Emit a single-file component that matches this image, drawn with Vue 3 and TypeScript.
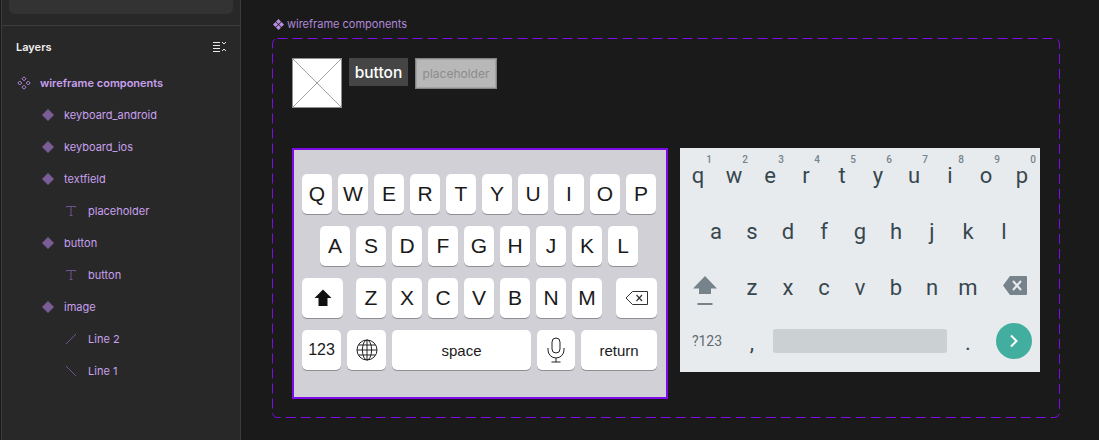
<script setup lang="ts">
type LayerKind = "root" | "comp" | "text" | "line2" | "line1";
interface Layer {
  name: string;
  kind: LayerKind;
  depth: number;
}

const layers: Layer[] = [
  { name: "wireframe components", kind: "root", depth: 0 },
  { name: "keyboard_android", kind: "comp", depth: 1 },
  { name: "keyboard_ios", kind: "comp", depth: 1 },
  { name: "textfield", kind: "comp", depth: 1 },
  { name: "placeholder", kind: "text", depth: 2 },
  { name: "button", kind: "comp", depth: 1 },
  { name: "button", kind: "text", depth: 2 },
  { name: "image", kind: "comp", depth: 1 },
  { name: "Line 2", kind: "line2", depth: 2 },
  { name: "Line 1", kind: "line1", depth: 2 },
];

const iosRow1 = "QWERTYUIOP".split("");
const iosRow2 = "ASDFGHJKL".split("");
const iosRow3 = "ZXCVBNM".split("");

const androidRow1 = "qwertyuiop".split("");
const androidHints = "1234567890".split("");
const androidRow2 = "asdfghjkl".split("");
const androidRow3 = "zxcvbnm".split("");
</script>

<template>
  <div class="app">
    <aside class="sidebar">
      <div class="top-panel"><div class="search"></div></div>
      <div class="layers-head">
        <span>Layers</span>
        <svg width="14" height="12" viewBox="0 0 14 12" fill="none" stroke="#e8e8e8" stroke-width="1">
          <path d="M0 1.5h7M0 4.5h7M0 7.5h7M0 10.5h7" />
          <path d="M9 1l2 2 2-2M9 10l2-2 2 2" />
        </svg>
      </div>
      <div
        v-for="(layer, i) in layers"
        :key="i"
        class="layer"
        :class="{ root: layer.kind === 'root' }"
        :style="{ paddingLeft: 16 + layer.depth * 24 + 'px' }"
      >
        <span class="layer-icon">
          <svg v-if="layer.kind === 'root'" width="14" height="14" viewBox="0 0 14 14" fill="none" stroke="#b088d8" stroke-width="1">
            <path d="M7 .8L9 2.8 7 4.8 5 2.8zM7 9.2L9 11.2 7 13.2 5 11.2zM2.8 5L4.8 7 2.8 9 .8 7zM11.2 5L13.2 7 11.2 9 9.2 7z" />
          </svg>
          <svg v-else-if="layer.kind === 'comp'" width="14" height="14" viewBox="0 0 14 14">
            <path d="M7 1L13 7 7 13 1 7z" fill="#7a5c99" />
          </svg>
          <svg v-else-if="layer.kind === 'text'" width="12" height="12" viewBox="0 0 12 12" fill="none" stroke="#6f5590" stroke-width="1">
            <path d="M1.5 2.5V1.5h9v1M6 1.5v8.5M4.5 10.5h3" />
          </svg>
          <svg v-else-if="layer.kind === 'line2'" width="12" height="12" viewBox="0 0 12 12" stroke="#6f5590" stroke-width="1">
            <path d="M1 11L11 1" />
          </svg>
          <svg v-else width="12" height="12" viewBox="0 0 12 12" stroke="#6f5590" stroke-width="1">
            <path d="M1 1L11 11" />
          </svg>
        </span>
        <span>{{ layer.name }}</span>
      </div>
    </aside>

    <main class="canvas">
      <div class="frame-label">
        <svg width="11" height="11" viewBox="0 0 11 11" fill="#b98ee0">
          <path d="M5.5 0L8 2.5 5.5 5 3 2.5zM5.5 6L8 8.5 5.5 11 3 8.5zM2.5 3L5 5.5 2.5 8 0 5.5zM8.5 3L11 5.5 8.5 8 6 5.5z" />
        </svg>
        <span>wireframe components</span>
      </div>
      <div class="frame">
        <svg class="frame-dash" width="788" height="380" viewBox="0 0 788 380" fill="none">
          <rect x="0.5" y="0.5" width="787" height="379" rx="5" stroke="#7f0ce8" stroke-width="1" stroke-dasharray="10 5" />
        </svg>

        <div class="atoms">
          <div class="image-ph">
            <svg width="48" height="48" viewBox="0 0 48 48" stroke="#a3a3a3" stroke-width="1">
              <path d="M0 0L48 48M48 0L0 48" />
            </svg>
          </div>
          <div class="btn">button</div>
          <div class="field">placeholder</div>
        </div>

        <div class="keyboards">
          <div class="ios">
            <div class="ios-row">
              <div v-for="k in iosRow1" :key="k" class="key">{{ k }}</div>
            </div>
            <div class="ios-row row-a">
              <div v-for="k in iosRow2" :key="k" class="key">{{ k }}</div>
            </div>
            <div class="ios-row">
              <div class="key wide shift-key">
                <svg width="18" height="18" viewBox="0 0 18 18"><path d="M9 .5L17.5 9H13.5V17H4.5V9H.5z" fill="#111" /></svg>
              </div>
              <div v-for="k in iosRow3" :key="k" class="key">{{ k }}</div>
              <div class="key wide del-key">
                <svg width="24" height="16" viewBox="0 0 24 16" fill="none" stroke="#333" stroke-width="1">
                  <path d="M7.5 1.5H22.5V14.5H7.5L1 8z" />
                  <path d="M11.5 5l5.5 6M17 5l-5.5 6" stroke-width="1.2" />
                </svg>
              </div>
            </div>
            <div class="ios-row">
              <div class="key small w39">123</div>
              <div class="key w39">
                <svg width="22" height="22" viewBox="0 0 22 22" fill="none" stroke="#222" stroke-width="1">
                  <circle cx="11" cy="11" r="10" />
                  <ellipse cx="11" cy="11" rx="4.6" ry="10" />
                  <path d="M11 1v20M1 11h20M2.5 6h17M2.5 16h17" />
                </svg>
              </div>
              <div class="key label space">space</div>
              <div class="key w38">
                <svg width="18" height="26" viewBox="0 0 18 26" fill="none" stroke="#222" stroke-width="1">
                  <rect x="5" y="1" width="8" height="15" rx="4" />
                  <path d="M1 11v2a8 8 0 0 0 16 0v-2M9 21v4M4.5 25h9" />
                </svg>
              </div>
              <div class="key label ret">return</div>
            </div>
          </div>

          <div class="android">
            <div class="a-row">
              <div v-for="(k, i) in androidRow1" :key="k" class="a-key">
                <span class="hint">{{ androidHints[i] }}</span>{{ k }}
              </div>
            </div>
            <div class="a-row centered">
              <div v-for="k in androidRow2" :key="k" class="a-key">{{ k }}</div>
            </div>
            <div class="a-row">
              <div class="a-side">
                <svg class="a-shift" width="24" height="30" viewBox="0 0 24 30" fill="#77838a">
                  <path d="M12 0L24 12.5H18V18H6V12.5H0z" />
                  <rect x="4.5" y="27" width="15" height="2" />
                </svg>
              </div>
              <div v-for="k in androidRow3" :key="k" class="a-key">{{ k }}</div>
              <div class="a-side">
                <svg class="a-del" width="24" height="19" viewBox="0 0 24 19">
                  <path d="M7 0H23a1 1 0 0 1 1 1V18a1 1 0 0 1-1 1H7L0 9.5z" fill="#77838a" />
                  <path d="M10 5l8 9M18 5l-8 9" stroke="#e8ebee" stroke-width="2" />
                </svg>
              </div>
            </div>
            <div class="a-row">
              <div class="a-side sym">?123</div>
              <div class="a-key punct">,</div>
              <div class="a-space"><div class="a-bar"></div></div>
              <div class="a-key punct">.</div>
              <div class="a-side">
                <div class="a-go">
                  <svg width="10" height="14" viewBox="0 0 10 14" fill="none" stroke="#fff" stroke-width="2">
                    <path d="M2 1.5L7.5 7 2 12.5" />
                  </svg>
                </div>
              </div>
            </div>
          </div>
        </div>
      </div>
    </main>
  </div>
</template>

<style>
html,
body {
  margin: 0;
  background: #1a1a1a;
}
</style>

<style scoped>
.app {
  display: flex;
  width: 1099px;
  height: 440px;
  overflow: hidden;
  background: #1a1a1a;
  font-family: Inter, "Liberation Sans", sans-serif;
}
.sidebar {
  width: 238px;
  margin-left: 1px;
  flex: none;
  background: #282828;
  border-left: 1px solid #3c3c3c;
  border-right: 1px solid #3c3c3c;
}
.top-panel {
  height: 26px;
  box-sizing: border-box;
  padding: 0 7px;
  border-bottom: 1px solid #3c3c3c;
}
.search {
  width: 224px;
  height: 14px;
  background: #333;
  border-radius: 0 0 6px 6px;
}
.layers-head {
  height: 41px;
  display: flex;
  align-items: center;
  justify-content: space-between;
  padding: 0 13px 0 14px;
  color: #f0f0f0;
  font-size: 11px;
  font-weight: 600;
}
.layer {
  height: 32px;
  display: flex;
  align-items: center;
  color: #c8a0ee;
  font-size: 11px;
  box-sizing: border-box;
  margin-left: -2px;
}
.layer.root {
  font-weight: 600;
}
.layer-icon {
  width: 24px;
  flex: none;
  display: flex;
  align-items: center;
  padding-left: 1px;
  box-sizing: border-box;
}
.canvas {
  flex: 1;
  padding: 17px 0 0 31px;
  min-width: 0;
}
.frame-label {
  height: 14px;
  display: flex;
  align-items: center;
  gap: 3px;
  color: #b088d8;
  font-size: 11px;
  margin-left: 1px;
  margin-bottom: 7px;
}
.frame {
  position: relative;
  width: 788px;
  height: 380px;
  box-sizing: border-box;
  padding: 20px;
}
.frame-dash {
  position: absolute;
  left: 0;
  top: 0;
}
.atoms {
  display: flex;
  align-items: flex-start;
  gap: 7px;
  height: 50px;
  margin-bottom: 40px;
}
.image-ph {
  width: 50px;
  height: 50px;
  box-sizing: border-box;
  background: #fff;
  border: 1px solid #8f8f8f;
  display: flex;
}
.btn {
  width: 59px;
  height: 28px;
  background: #454545;
  color: #fff;
  font-size: 15.5px;
  font-weight: 500;
  display: flex;
  align-items: center;
  justify-content: center;
}
.field {
  width: 82px;
  height: 31px;
  box-sizing: border-box;
  background: #b8b8b8;
  border: 1px solid #848484;
  box-shadow: inset 0 0 0 1px #a4a4a4;
  color: #8c8c8c;
  font-size: 12px;
  display: flex;
  align-items: center;
  justify-content: center;
}
.keyboards {
  display: flex;
  align-items: flex-start;
  gap: 12px;
}
.ios {
  width: 376px;
  height: 251px;
  box-sizing: border-box;
  background: #d1d0d7;
  border: 2px solid #7f0ce8;
  padding: 24px 0 0 8px;
  display: flex;
  flex-direction: column;
  gap: 12px;
  font-family: "Liberation Sans", Arial, sans-serif;
}
.ios-row {
  display: flex;
  gap: 6px;
}
.row-a {
  padding-left: 18px;
}
.key {
  width: 30px;
  height: 40px;
  flex: none;
  background: #fff;
  border-radius: 5px;
  box-shadow: 0 1px 0 #8e8e93;
  display: flex;
  align-items: center;
  justify-content: center;
  color: #1a1a1a;
  font-size: 21px;
}
.wide {
  width: 41px;
}
.shift-key {
  margin-right: 7px;
}
.del-key {
  margin-left: 8px;
}
.w39 {
  width: 39px;
}
.w38 {
  width: 38px;
}
.small {
  font-size: 16px;
}
.label {
  font-size: 15px;
}
.space {
  width: 139px;
}
.ret {
  width: 76px;
}
.android {
  width: 360px;
  height: 224px;
  background: #e8ebee;
  font-family: Roboto, "Noto Sans", sans-serif;
  color: #37474f;
}
.a-row {
  display: flex;
  height: 56px;
}
.a-row.centered {
  padding-left: 18px;
}
.a-key {
  position: relative;
  width: 36px;
  flex: none;
  display: flex;
  align-items: center;
  justify-content: center;
  font-size: 22px;
  line-height: 1;
}
.hint {
  position: absolute;
  top: 7px;
  right: 4px;
  font-size: 10px;
  font-weight: 500;
  color: #77838a;
}
.a-side {
  width: 54px;
  flex: none;
  display: flex;
  align-items: center;
  justify-content: center;
}
.a-shift {
  margin: 5px 4px 0 0;
}
.a-del {
  margin: 0 0 5px 4px;
}
.sym {
  font-size: 14px;
  color: #5f6b72;
  padding-bottom: 6px;
  box-sizing: border-box;
}
.punct {
  padding-bottom: 2px;
  box-sizing: border-box;
}
.a-space {
  width: 180px;
  flex: none;
  display: flex;
  align-items: center;
  justify-content: center;
  padding-bottom: 6px;
  box-sizing: border-box;
}
.a-bar {
  width: 174px;
  height: 24px;
  background: #cbd0d3;
  border-radius: 3px;
}
.a-go {
  width: 36px;
  height: 36px;
  margin: 0 0 6px 1px;
  border-radius: 50%;
  background: #41ae9f;
  display: flex;
  align-items: center;
  justify-content: center;
}
</style>
